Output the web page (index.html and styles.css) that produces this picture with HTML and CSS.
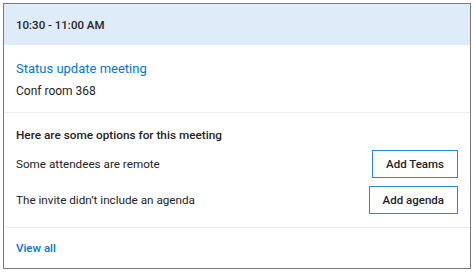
FILE: index.html
```html
<!DOCTYPE html>
<html>
<head>
<meta charset="utf-8">
<link rel="stylesheet" href="styles.css">
</head>
<body>
<div class="card">
  <div class="header">10:30 - 11:00 AM</div>
  <div class="details">
    <div class="title">Status update meeting</div>
    <div class="location">Conf room 368</div>
  </div>
  <div class="options">
    <div class="heading">Here are some options for this meeting</div>
    <div class="row row-first">
      <span class="label">Some attendees are remote</span>
      <button class="btn">Add Teams</button>
    </div>
    <div class="row">
      <span class="label">The invite didn’t include an agenda</span>
      <button class="btn">Add agenda</button>
    </div>
  </div>
  <div class="footer"><a class="link">View all</a></div>
</div>
</body>
</html>
```
FILE: styles.css
```css
* { box-sizing: border-box; }
html, body { margin: 0; padding: 0; background: #fff; }
body {
  font-family: Roboto, "Open Sans", sans-serif;
  color: #252423;
  padding: 3px;
}
.card {
  width: 468px;
  height: 266px;
  border: 1px solid #7a7a7a;
  display: flex;
  flex-direction: column;
}
.header {
  height: 41px;
  flex: none;
  background: #deecf9;
  display: flex;
  align-items: center;
  padding-left: 12px;
  font-size: 11.5px;
  font-weight: 500;
}
.details {
  flex: none;
  padding: 15px 12px 0;
  height: 68px;
  border-bottom: 1px solid #edebe9;
}
.title {
  color: #0078d4;
  font-size: 13px;
  line-height: 18px;
}
.location {
  font-size: 12px;
  line-height: 16px;
  margin-top: 5px;
}
.options {
  flex: none;
  padding: 14px 12px 0 12px;
  height: 115px;
  border-bottom: 1px solid #edebe9;
}
.heading {
  font-size: 11.8px;
  font-weight: 500;
  line-height: 16px;
}
.row {
  display: flex;
  justify-content: space-between;
  align-items: center;
  height: 28px;
  font-size: 11.7px;
  margin-top: 8px;
}
.row-first { margin-top: 7px; }
.btn {
  font-family: inherit;
  font-size: 11.5px;
  font-weight: 500;
  color: #252423;
  background: #fff;
  border: 1px solid #2b88d8;
  height: 28px;
  padding: 0 13px;
  border-radius: 0;
}
.footer {
  flex: 1;
  display: flex;
  align-items: center;
  padding-left: 12px;
}
.link {
  color: #0078d4;
  font-size: 11.5px;
  font-weight: 500;
}
```
